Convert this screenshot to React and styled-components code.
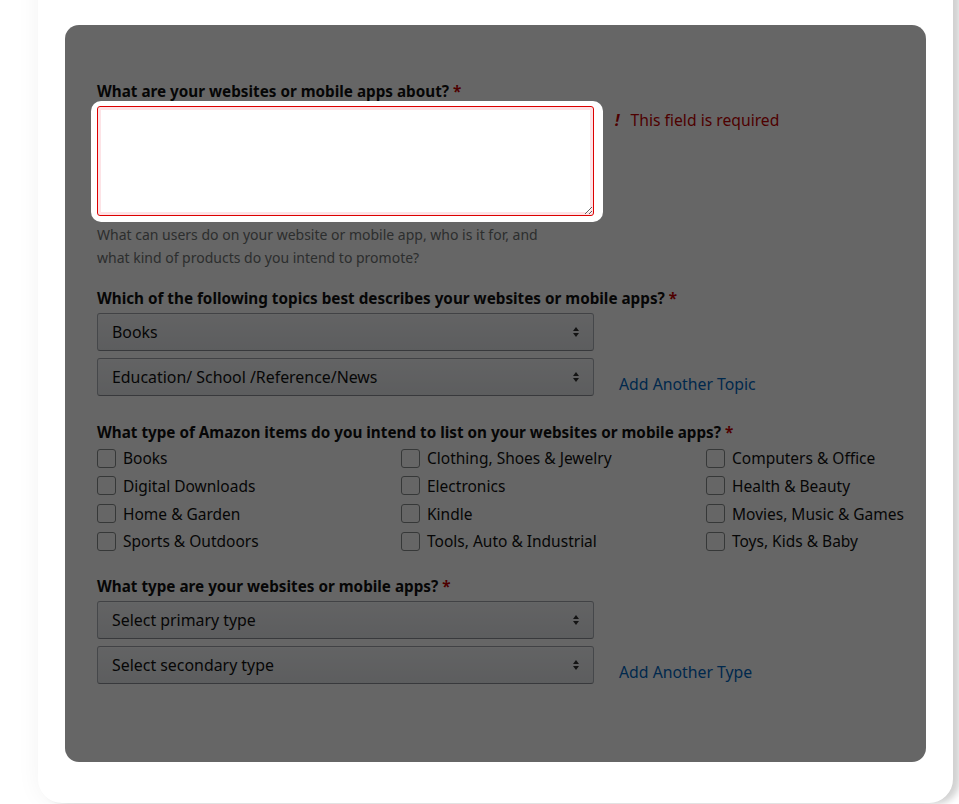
import styled, { createGlobalStyle } from "styled-components";

const GlobalStyle = createGlobalStyle`
  html, body {
    margin: 0;
    background: #fff;
    overflow: hidden;
  }
  body {
    font-family: "Noto Sans", "Liberation Sans", Arial, sans-serif;
    color: #111;
  }
`;

const itemTypes = [
  "Books",
  "Clothing, Shoes & Jewelry",
  "Computers & Office",
  "Digital Downloads",
  "Electronics",
  "Health & Beauty",
  "Home & Garden",
  "Kindle",
  "Movies, Music & Games",
  "Sports & Outdoors",
  "Tools, Auto & Industrial",
  "Toys, Kids & Baby",
];

function Arrows() {
  return (
    <svg width="8" height="12" viewBox="0 0 8 12">
      <path d="M4 1 L7 5 H1 Z" fill="#333" />
      <path d="M4 11 L7 7 H1 Z" fill="#333" />
    </svg>
  );
}

function Select({ value }) {
  return (
    <StyledSelect>
      <span>{value}</span>
      <Arrows />
    </StyledSelect>
  );
}

export default function App() {
  return (
    <>
      <GlobalStyle />
      <Page>
        <Card>
          <Form>
            <Overlay />
            <Label>
              What are your websites or mobile apps about? <Star>*</Star>
            </Label>
            <FieldRow>
              <Spotlight>
                <TextArea />
              </Spotlight>
              <ErrorText>
                <Bang>!</Bang>
                This field is required
              </ErrorText>
            </FieldRow>
            <Helper>
              What can users do on your website or mobile app, who is it for, and
              <br />
              what kind of products do you intend to promote?
            </Helper>

            <Label $top={20.5}>
              Which of the following topics best describes your websites or mobile apps? <Star>*</Star>
            </Label>
            <SelectStack>
              <Select value="Books" />
              <SelectRow>
                <Select value="Education/ School /Reference/News" />
                <AddLink>Add Another Topic</AddLink>
              </SelectRow>
            </SelectStack>

            <Label $top={26.5} $bottom={3}>
              What type of Amazon items do you intend to list on your websites or mobile apps? <Star>*</Star>
            </Label>
            <CheckGrid>
              {itemTypes.map((item) => (
                <CheckItem key={item}>
                  <Box />
                  {item}
                </CheckItem>
              ))}
            </CheckGrid>

            <Label $top={21.5} $bottom={5.5}>
              What type are your websites or mobile apps? <Star>*</Star>
            </Label>
            <SelectStack>
              <Select value="Select primary type" />
              <SelectRow>
                <Select value="Select secondary type" />
                <AddLink>Add Another Type</AddLink>
              </SelectRow>
            </SelectStack>
          </Form>
        </Card>
      </Page>
    </>
  );
}

const Page = styled.div`
  height: 804px;
  padding: 0 6px 0 38px;
  overflow: hidden;
`;

const Card = styled.div`
  width: 861px;
  margin-top: -30px;
  padding: 55px 27px 41px;
  background: #fff;
  border-radius: 0 0 24px 24px;
  box-shadow: 7px 1px 6px rgba(0, 0, 0, 0.16), 0 0 24px rgba(0, 0, 0, 0.05);
`;

const Form = styled.div`
  position: relative;
  height: 737px;
  box-sizing: border-box;
  padding: 57px 32px 0;
  border-radius: 14px;
  background: #fff;
`;

const Overlay = styled.div`
  position: absolute;
  inset: 0;
  z-index: 1;
  border-radius: 14px;
  background: rgba(0, 0, 0, 0.6);
`;

const Label = styled.div`
  margin: ${(p) => p.$top || 0}px 0 ${(p) => p.$bottom ?? 5}px;
  font-size: 15.25px;
  font-weight: 700;
  line-height: 19px;
  white-space: nowrap;
`;

const Star = styled.span`
  color: #c40000;
`;

const FieldRow = styled.div`
  display: flex;
  align-items: flex-start;
  gap: 21px;
`;

const Spotlight = styled.div`
  position: relative;
  z-index: 2;
  margin: -5px -9px -6px -6px;
  padding: 5px 9px 6px 6px;
  background: #fff;
  border-radius: 10px;
`;

const TextArea = styled.textarea`
  display: block;
  width: 497px;
  height: 110px;
  box-sizing: border-box;
  margin: 0;
  border: 1px solid #dd0000;
  border-radius: 3px;
  box-shadow: inset 0 0 0 3px #fde3e6;
  outline: none;
  background: #fff;
`;

const ErrorText = styled.div`
  display: flex;
  gap: 11px;
  margin-top: 4.5px;
  font-size: 15.7px;
  line-height: 19px;
  color: #c40000;
`;

const Bang = styled.span`
  font-weight: 700;
  font-style: italic;
`;

const Helper = styled.div`
  margin: 6.5px 0 0;
  font-size: 14px;
  line-height: 23px;
  color: #6f7373;
`;

const SelectStack = styled.div`
  display: flex;
  flex-direction: column;
  gap: 7px;
`;

const SelectRow = styled.div`
  display: flex;
  align-items: flex-end;
  gap: 25px;
`;

const StyledSelect = styled.div`
  display: flex;
  align-items: center;
  justify-content: space-between;
  width: 497px;
  height: 38px;
  box-sizing: border-box;
  padding: 0 13px 0 14px;
  border: 1px solid #adb1b8;
  border-top-color: #a2a6ac;
  border-bottom-color: #8d9096;
  border-radius: 3px;
  background: linear-gradient(to bottom, #f7f8fa, #e7e9ec);
  box-shadow: inset 0 1px 0 rgba(255, 255, 255, 0.6);
  font-size: 15.9px;
  color: #111;
`;

const AddLink = styled.span`
  margin-bottom: 2px;
  font-size: 15.8px;
  line-height: 19px;
  color: #0066c0;
`;

const CheckGrid = styled.div`
  display: grid;
  grid-template-columns: 304px 305px auto;
  grid-auto-rows: 27.67px;
`;

const CheckItem = styled.label`
  display: flex;
  align-items: center;
  gap: 7px;
  font-size: 15.5px;
  white-space: nowrap;
`;

const Box = styled.span`
  width: 19px;
  height: 19px;
  box-sizing: border-box;
  border: 1px solid #888c8c;
  border-radius: 3px;
  background: #fff;
`;
